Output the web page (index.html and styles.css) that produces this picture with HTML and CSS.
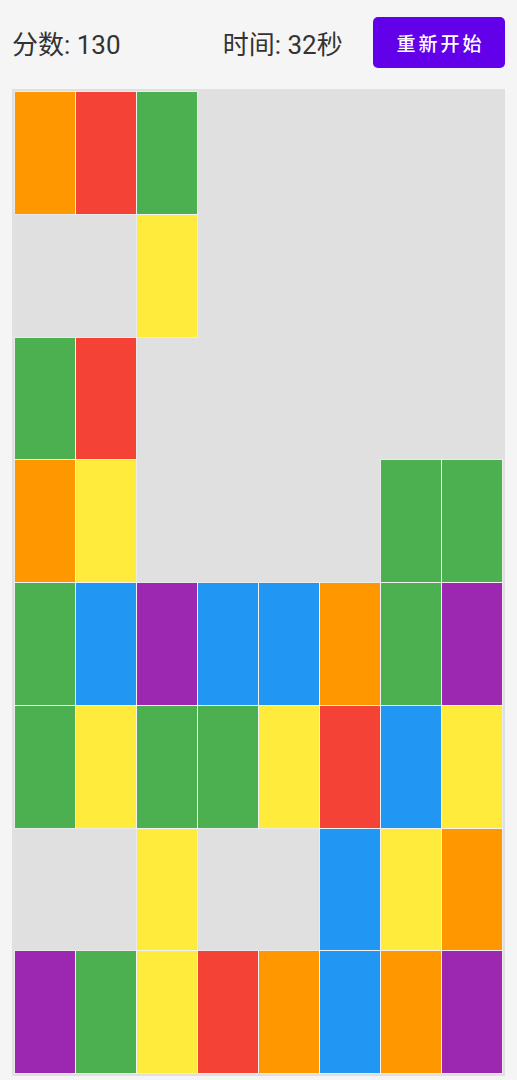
FILE: index.html
```html
<!DOCTYPE html>
<html lang="zh-CN">
<head>
  <meta charset="UTF-8" />
  <title>消除方块</title>
  <meta name="viewport" content="width=device-width, initial-scale=1.0" />
  <link rel="stylesheet" href="styles.css">
</head>
<body>

<header class="topbar">
  <div class="score">分数: <span id="score">130</span></div>
  <div class="timer">时间: <span id="time">32</span>秒</div>
  <button class="restart" id="restart">重新开始</button>
</header>

<div class="board" id="board"></div>

<script>
  // o=orange r=red g=green y=yellow b=blue p=purple .=empty
  const layout = [
    "org.....",
    "..y.....",
    "gr......",
    "oy....gg",
    "gbpbbogp",
    "gyggyrby",
    "..y..byo",
    "pgyrobop"
  ];

  const names = { o: "orange", r: "red", g: "green", y: "yellow", b: "blue", p: "purple" };

  function drawBoard() {
    const board = document.getElementById("board");
    board.innerHTML = "";
    layout.forEach(row => {
      for (const c of row) {
        const cell = document.createElement("div");
        cell.className = "cell";
        if (names[c]) cell.classList.add("tile", names[c]);
        board.appendChild(cell);
      }
    });
  }

  drawBoard();
</script>

</body>
</html>
```

FILE: styles.css
```css
body {
  font-family: Roboto, "Noto Sans CJK SC", sans-serif;
  background-color: #f5f5f5;
  margin: 0;
  padding: 0 12px;
}

.topbar {
  display: flex;
  align-items: center;
  height: 89px;
  padding-bottom: 4px;
  box-sizing: border-box;
}

.score,
.timer {
  flex: 1;
  font-size: 26px;
  color: #333;
}

.timer {
  text-align: center;
}

.restart {
  width: 132px;
  height: 51px;
  background-color: #6200ea;
  color: #fff;
  border: none;
  border-radius: 5px;
  font-family: Roboto, "Noto Sans CJK SC", sans-serif;
  font-size: 19px;
  font-weight: 500;
  letter-spacing: 3px;
  text-indent: 3px;
  cursor: pointer;
}

.board {
  display: grid;
  grid-template-columns: repeat(8, 1fr);
  grid-template-rows: repeat(8, 1fr);
  gap: 1px;
  height: 987px;
  padding: 3px;
  box-sizing: border-box;
  background-color: #e0e0e0;
}

.tile {
  box-shadow: 0 0 0 1px rgba(255, 255, 255, 0.35);
}

.orange { background-color: #ff9800; }
.red { background-color: #f44336; }
.green { background-color: #4caf50; }
.yellow { background-color: #ffeb3b; }
.blue { background-color: #2196f3; }
.purple { background-color: #9c27b0; }
```
